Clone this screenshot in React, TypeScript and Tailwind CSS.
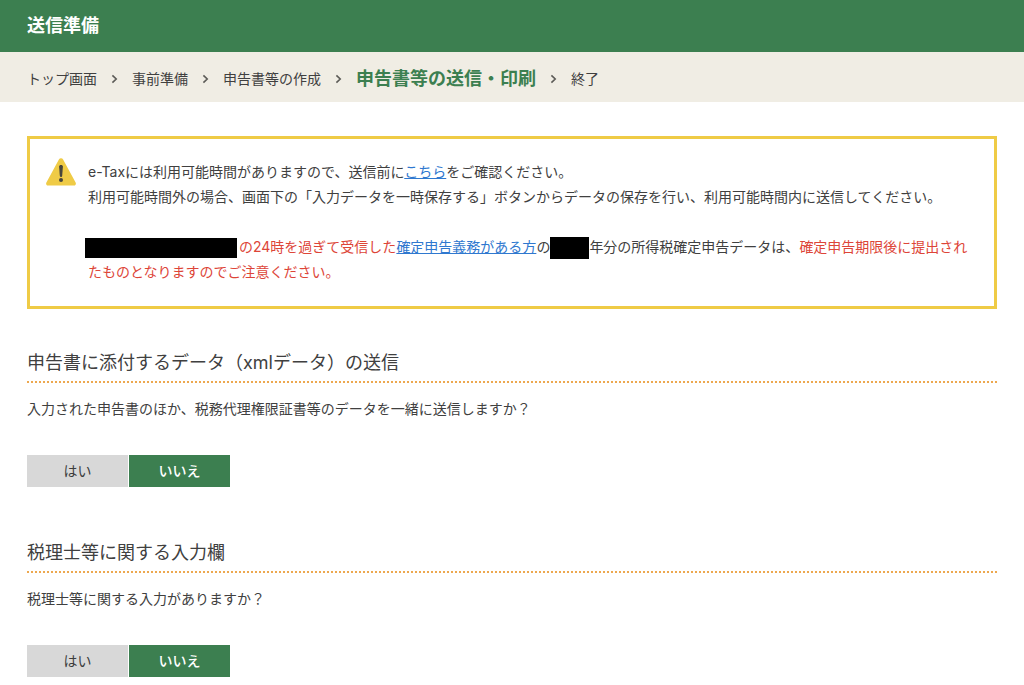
import { Fragment, useState } from 'react';

const steps = ['トップ画面', '事前準備', '申告書等の作成', '申告書等の送信・印刷', '終了'];
const currentStep = 3;

function Chevron() {
  return (
    <svg viewBox="0 0 7 10" className="h-[10px] w-[7px] shrink-0" fill="none" aria-hidden="true">
      <path d="M1.4 1.4 5.2 5 1.4 8.6" stroke="#5c5b57" strokeWidth="1.6" />
    </svg>
  );
}

function WarningIcon() {
  return (
    <svg viewBox="0 0 30 28" className="h-7 w-[30px] shrink-0" role="img" aria-label="注意">
      <path
        d="M12.9 1.4a2.4 2.4 0 0 1 4.2 0l12.5 23.2a2 2 0 0 1-1.8 3H2.2a2 2 0 0 1-1.8-3Z"
        fill="#efcb46"
      />
      <path
        d="M13.1 8.6c0-1.1.7-1.6 1.9-1.6s1.9.5 1.9 1.6l-.7 9.2c-.1.8-.5 1.2-1.2 1.2s-1.1-.4-1.2-1.2Z"
        fill="#47453c"
      />
      <circle cx="15" cy="22" r="2" fill="#47453c" />
    </svg>
  );
}

function Question({ title, text }: { title: string; text: string }) {
  const [answer, setAnswer] = useState('いいえ');
  return (
    <section>
      <h2 className="border-b-2 border-dotted border-[#eda84f] pb-1.5 text-lg leading-[25px]">{title}</h2>
      <p className="mt-[13px] text-sm leading-[25px]">{text}</p>
      <div className="mt-[34px] flex gap-px" role="group" aria-label={title}>
        {['はい', 'いいえ'].map((option) => (
          <button
            key={option}
            type="button"
            aria-pressed={answer === option}
            onClick={() => setAnswer(option)}
            className={
              answer === option
                ? 'h-8 w-[101px] bg-[#3c7f50] text-sm font-medium text-white'
                : 'h-8 w-[101px] bg-[#d8d8d8] text-sm text-[#3c3c3c]'
            }
          >
            {option}
          </button>
        ))}
      </div>
    </section>
  );
}

export default function App() {
  return (
    <div className="bg-white font-['Inter','Noto_Sans_CJK_JP',sans-serif] text-[#404040]" lang="ja">
      <header className="flex h-[52px] items-center bg-[#3c7f50] px-[27px]">
        <h1 className="text-lg font-bold text-white">送信準備</h1>
      </header>
      <nav className="bg-[#f0ede4] px-[27px] pt-1" aria-label="手順">
        <ol className="flex h-[46px] items-center gap-[14px] text-sm">
          {steps.map((step, index) => (
            <Fragment key={step}>
              {index > 0 && (
                <li aria-hidden="true">
                  <Chevron />
                </li>
              )}
              <li
                aria-current={index === currentStep ? 'step' : undefined}
                className={index === currentStep ? 'text-lg font-bold text-[#3c7f50]' : undefined}
              >
                {step}
              </li>
            </Fragment>
          ))}
        </ol>
      </nav>
      <main className="px-[27px] pt-[34px]">
        <div className="flex gap-3 border-3 border-[#efcb46] pt-[19px] pr-[18px] pb-[22px] pl-4">
          <WarningIcon />
          <div className="pt-px text-sm leading-[25px]">
            <p>
              e-Taxには利用可能時間がありますので、送信前に
              <a href="#hours" className="text-[#2f78cf] underline">こちら</a>
              をご確認ください。
            </p>
            <p>
              利用可能時間外の場合、画面下の「入力データを一時保存する」ボタンからデータの保存を行い、利用可能時間内に送信してください。
            </p>
            <p className="mt-[25px] text-[#dd4538]">
              <span className="-ml-[3px] mr-0.5 inline-block h-5 w-[152px] bg-black align-middle" />
              の24時を過ぎて受信した
              <a href="#obligation" className="text-[#2f78cf] underline">確定申告義務がある方</a>
              <span className="text-[#404040]">
                の
                <span className="inline-block h-[22px] w-[39px] bg-black align-middle" />
                年分の所得税確定申告データは、
              </span>
              確定申告期限後に提出されたものとなりますのでご注意ください。
            </p>
          </div>
        </div>
        <div className="grid gap-[53px] pt-[41px]">
          <Question
            title="申告書に添付するデータ（xmlデータ）の送信"
            text="入力された申告書のほか、税務代理権限証書等のデータを一緒に送信しますか？"
          />
          <Question title="税理士等に関する入力欄" text="税理士等に関する入力がありますか？" />
        </div>
      </main>
    </div>
  );
}
